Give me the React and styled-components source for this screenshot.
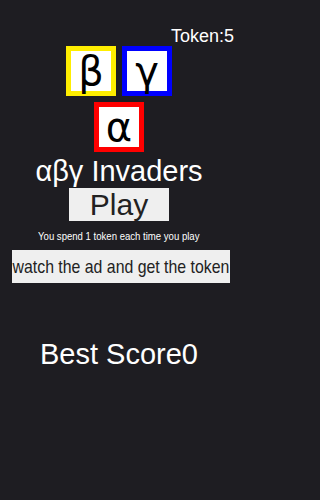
import React from "react";
import styled, { createGlobalStyle } from "styled-components";

const Global = createGlobalStyle`
  html, body { margin: 0; padding: 0; background: #1e1d22; }
  body { font-family: "Liberation Sans", Arial, sans-serif; }
`;

const Screen = styled.div`
  width: 238px;
  height: 500px;
  background: #1e1d22;
  color: #ffffff;
  display: flex;
  flex-direction: column;
  align-items: center;
  font-family: "Liberation Sans", Arial, sans-serif;
`;

const TokenBar = styled.div`
  align-self: stretch;
  display: flex;
  justify-content: flex-end;
  padding: 26px 4px 0 0;
  font-size: 18px;
  line-height: 21px;
  height: 20px;
`;

const Logo = styled.div`
  display: flex;
  flex-direction: column;
  align-items: center;
  gap: 6px;
`;

const LogoRow = styled.div`
  display: flex;
  gap: 6px;
`;

const Tile = styled.div`
  box-sizing: border-box;
  width: 50px;
  height: 50px;
  border: 5px solid ${(p) => p.$color};
  background: #ffffff;
  color: #000000;
  display: flex;
  align-items: center;
  justify-content: center;
  font-size: 40px;
  line-height: 1;
  font-family: "DejaVu Sans", sans-serif;
`;

const Title = styled.div`
  font-size: 29px;
  line-height: 34px;
  margin-top: 2px;
`;

const Button = styled.button`
  background: #efefef;
  color: #222222;
  border: none;
  padding: 0 ${(p) => p.$padX}px;
  margin-left: ${(p) => p.$shift || 0}px;
  height: 33px;
  white-space: nowrap;
  font-family: "Liberation Sans", Arial, sans-serif;
  font-size: ${(p) => p.$size}px;
  line-height: 33px;
  cursor: pointer;
`;

const Squeeze = styled.span`
  display: inline-block;
  white-space: nowrap;
  transform: scaleX(${(p) => p.$k});
  transform-origin: center;
  margin: 0 ${(p) => p.$m}px;
`;

const Note = styled.div`
  font-size: 11px;
  line-height: 14px;
  margin: 8px 0 7px;
`;

const Best = styled.div`
  font-size: 29px;
  line-height: 34px;
  margin-top: 54px;
`;

export default function App() {
  return (
    <>
      <Global />
      <Screen>
        <TokenBar>Token:5</TokenBar>
        <Logo>
          <LogoRow>
            <Tile $color="#ffee00">β</Tile>
            <Tile $color="#0000ff">γ</Tile>
          </LogoRow>
          <Tile $color="#ff0000">α</Tile>
        </Logo>
        <Title>αβγ Invaders</Title>
        <Button $size={30} $padX={21}>Play</Button>
        <Note>
          <Squeeze $k={0.87} $m={-12}>You spend 1 token each time you play</Squeeze>
        </Note>
        <Button $size={19} $padX={1} $shift={4}>
          <Squeeze $k={0.834} $m={-21.5}>watch the ad and get the token</Squeeze>
        </Button>
        <Best>Best Score0</Best>
      </Screen>
    </>
  );
}
